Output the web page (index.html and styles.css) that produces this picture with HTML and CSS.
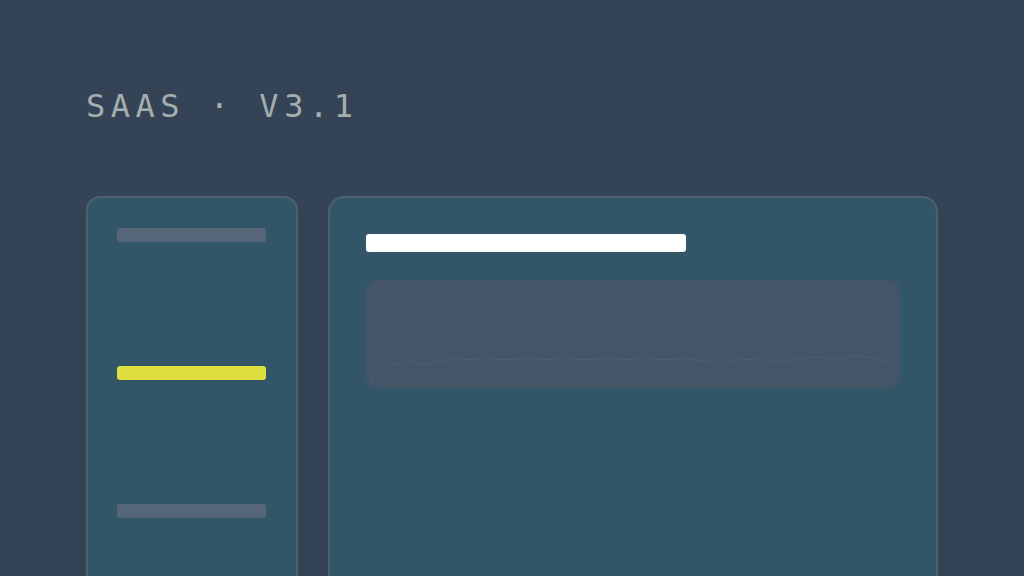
FILE: index.html
```html
<!DOCTYPE html>
<html lang="en">
<head>
<meta charset="utf-8">
<title>SaaS v3.1</title>
<link rel="stylesheet" href="styles.css">
</head>
<body>
<main class="page">
  <header class="brand">SAAS · V3.1</header>
  <section class="layout">
    <aside class="sidebar">
      <div class="nav-bar"></div>
      <div class="nav-bar nav-bar--active"></div>
      <div class="nav-bar"></div>
    </aside>
    <section class="content">
      <div class="title-bar"></div>
      <div class="chart">
        <svg class="sparkline" viewBox="0 0 534 108" preserveAspectRatio="none">
          <polyline points="4,102 10,92 16,86 24,82 32,84 44,81 56,85 70,82 90,79 120,80 160,79 200,80 240,79 280,80 320,79 340,81 355,84 370,80 390,79 410,82 430,79 450,77 470,79 490,76 510,78 525,84 530,92"/>
        </svg>
      </div>
    </section>
  </section>
</main>
</body>
</html>
```

FILE: styles.css
```css
html, body {
  margin: 0;
  padding: 0;
  background: #344456;
}

.page {
  height: 100vh;
  overflow: hidden;
  padding: 90px 0 0 86px;
  box-sizing: border-box;
}

.brand {
  font-family: "DejaVu Sans Mono", "Liberation Mono", monospace;
  font-size: 32px;
  line-height: 32px;
  letter-spacing: 5.5px;
  color: #a5aeaf;
  margin: 0 0 74px 0;
  white-space: nowrap;
}

.layout {
  display: flex;
  align-items: flex-start;
  gap: 30px;
}

.sidebar {
  flex: none;
  width: 212px;
  height: 400px;
  box-sizing: border-box;
  border: 2px solid #4e6072;
  border-radius: 14px;
  background: #335568;
  padding: 30px 30px 0 29px;
  display: flex;
  flex-direction: column;
  gap: 124px;
}

.nav-bar {
  height: 14px;
  border-radius: 3px;
  background: #566678;
}

.nav-bar--active {
  background: #dfdf40;
}

.content {
  flex: none;
  width: 610px;
  height: 400px;
  box-sizing: border-box;
  border: 2px solid #4e6072;
  border-radius: 16px;
  background: #335568;
  padding: 36px;
  display: flex;
  flex-direction: column;
  gap: 28px;
}

.title-bar {
  width: 320px;
  height: 18px;
  border-radius: 3px;
  background: #ffffff;
}

.chart {
  height: 108px;
  border-radius: 12px;
  background: #445567;
  overflow: hidden;
}

.sparkline {
  width: 100%;
  height: 100%;
  display: block;
}

.sparkline polyline {
  fill: none;
  stroke: #56677a;
  stroke-width: 1;
  stroke-dasharray: 1 1;
}
```
